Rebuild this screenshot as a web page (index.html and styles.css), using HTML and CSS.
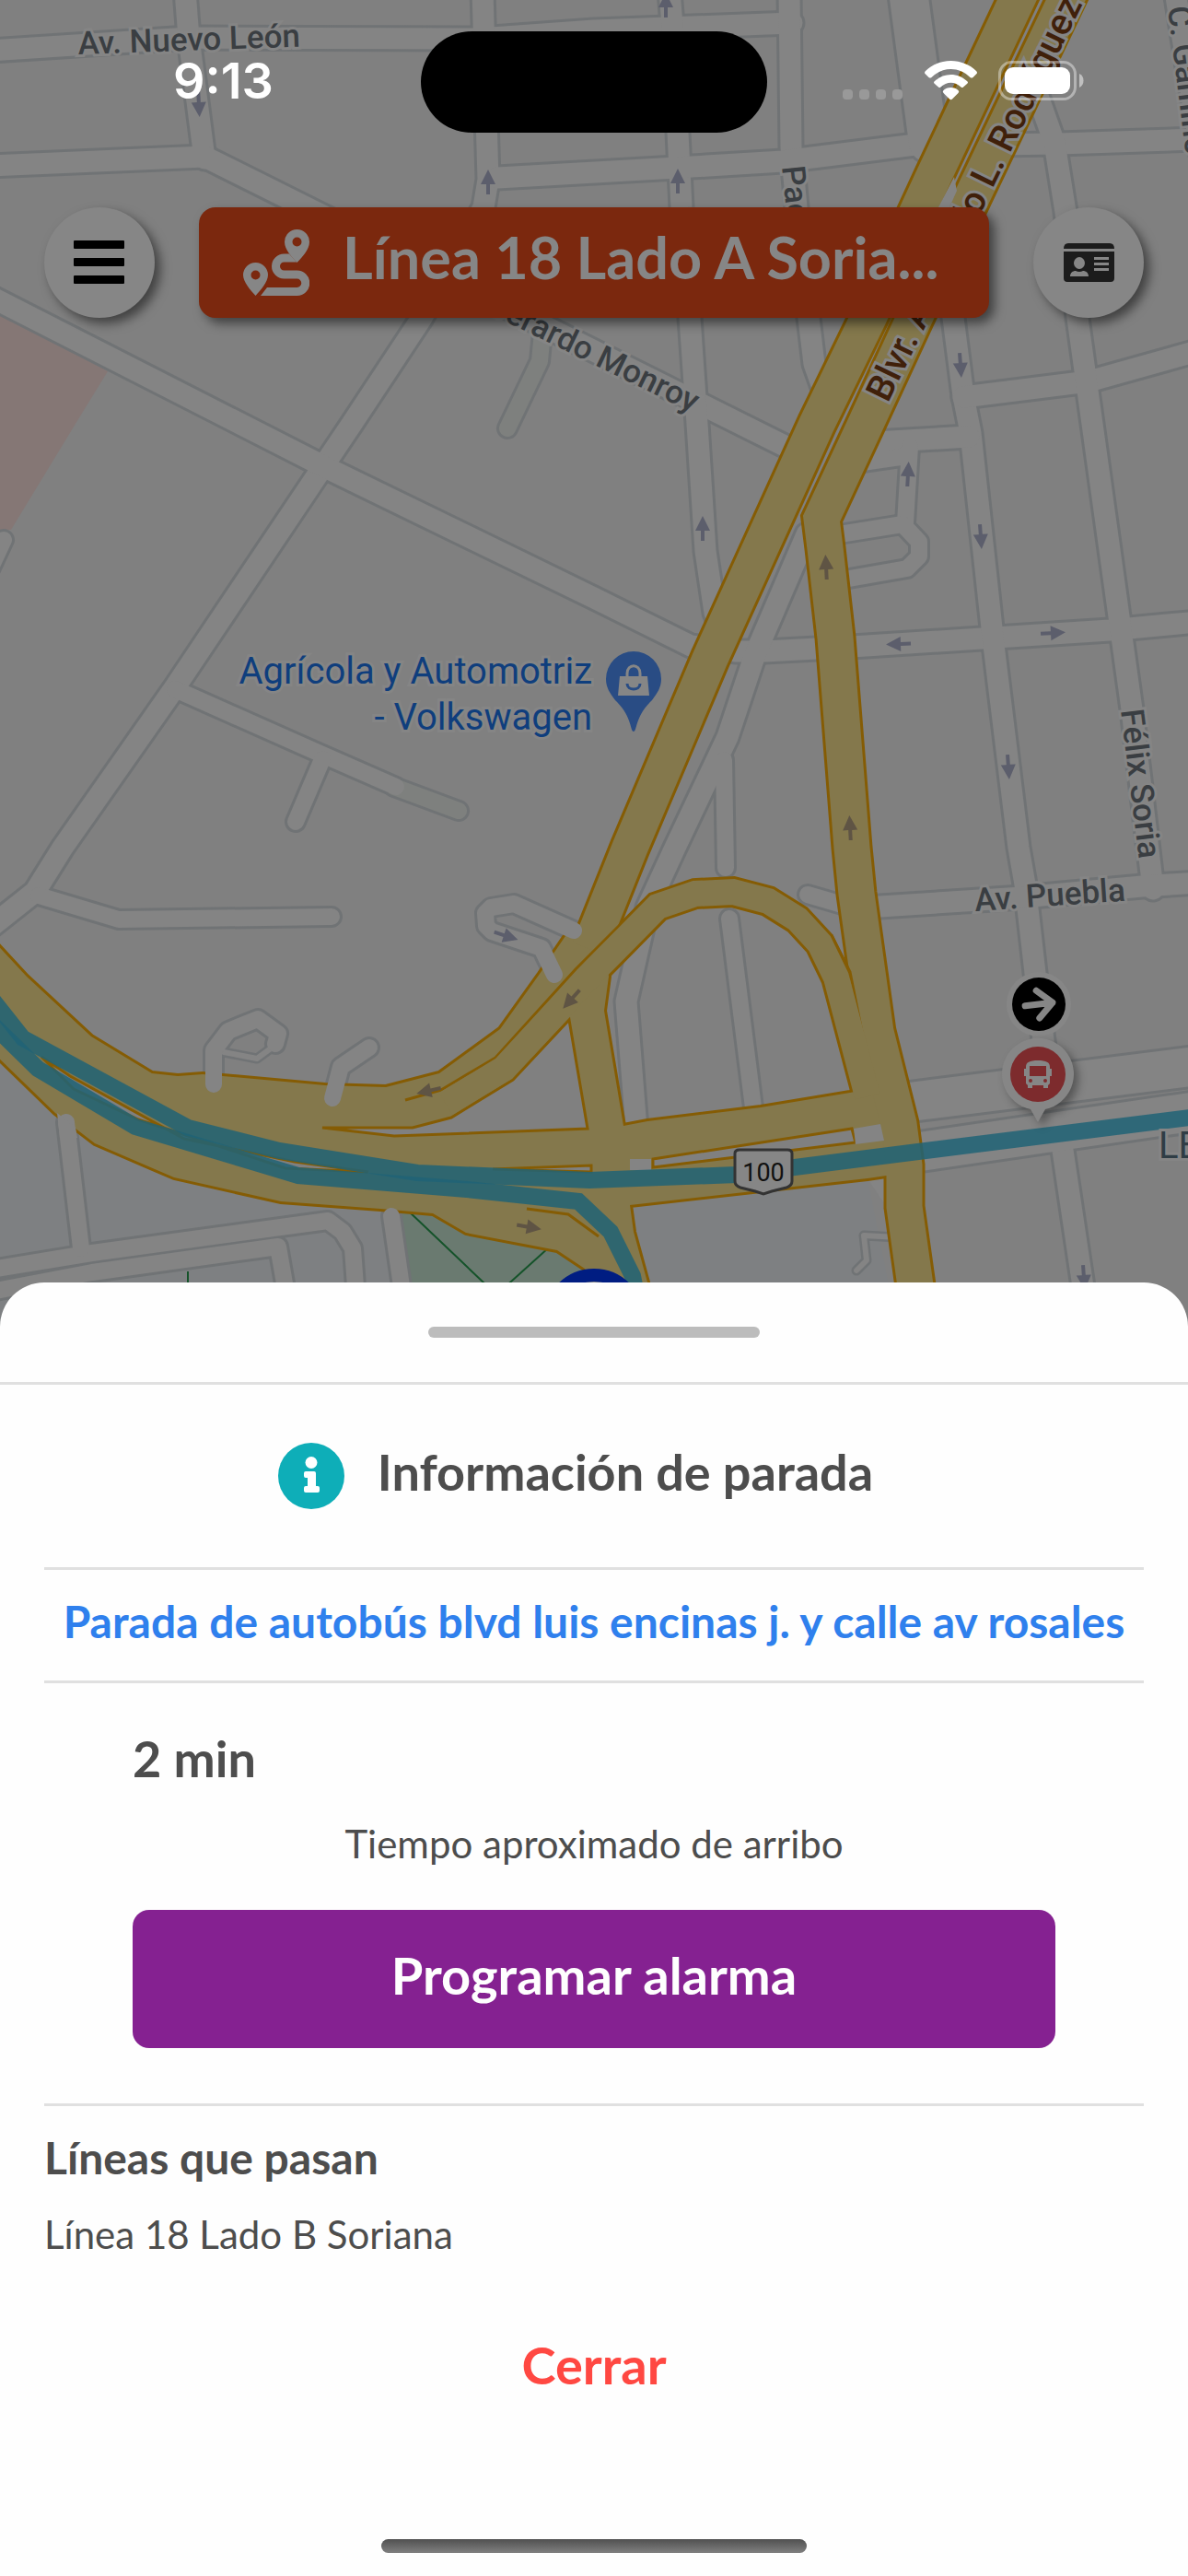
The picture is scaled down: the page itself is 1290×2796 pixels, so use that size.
FILE: index.html
```html
<!DOCTYPE html>
<html lang="es">
<head>
    <meta charset="UTF-8">
    <meta name="viewport" content="width=device-width, initial-scale=1.0">
    <title>Información de parada</title>
    <link rel="stylesheet" href="styles.css">
</head>
<body>
    <div class="screen">
        <div class="map-area">
            <!-- Map -->
            <svg class="map" viewBox="0 0 1290 1440" preserveAspectRatio="xMidYMin slice" aria-hidden="true">
                <defs>
                    <g id="streets">
                        <path d="M-10 55L205 41L520 42L645 33L860 25"/>
                        <path d="M201 -10L205 41L222 172"/>
                        <path d="M-10 180L222 170L850 483"/>
                        <path d="M524 -10L530 195L525 225L458 345L382 460L347 512L190 746L68 920L38 968L-10 1006"/>
                        <path d="M-10 322L355 508L645 649L750 701L800 707H830L925 702L1066 693L1205 684L1300 675"/>
                        <path d="M727 -10L731 40L736 144L740 225L749 345L757 460L766 598L776 665L790 700"/>
                        <path d="M857 -10L859 160L865 225L878 345L884 395L900 440"/>
                        <path d="M540 193L735 182L850 175L1010 155"/>
                        <path d="M1080 157L1150 156L1300 151"/>
                        <path d="M1020 200L1035 345L1046 430L1054 470L1079 700L1106 920L1113 960L1124 1056L1138 1170"/>
                        <path d="M1152 1235L1178 1410"/>
                        <path d="M1046 431L1182 414L1300 381"/>
                        <path d="M950 480L1052 474"/>
                        <path d="M1122 90L1145 155L1157 230L1170 345L1186 460L1229 770L1252 965"/>
                        <path d="M1276 -10L1306 180"/>
                        <path d="M876 580L820 710L790 800L733 920L703 985L680 1087L691 1225"/>
                        <path d="M940 985L1110 974L1240 962L1300 958"/>
                    </g>
                    <g id="lanes">
                        <path d="M42 972L129 998L360 995"/>
                        <path d="M190 748L350 819L430 854"/>
                        <path d="M350 824L321 892"/>
                        <path d="M4 586L-12 620"/>
                        <path d="M930 503L985 495"/>
                        <path d="M988 485L983 568"/>
                        <path d="M905 581L980 569L998 588V604L985 617L905 631"/>
                        <path d="M786 825L788 942"/>
                        <path d="M792 997L819 1210"/>
                        <path d="M877 971L925 985"/>
                        <path d="M-10 1378L100 1360L356 1325L372 1337L383 1355L387 1410"/>
                        <path d="M-10 1402L100 1381L302 1353L312 1410"/>
                    </g>
                    <!-- Dead ends that run over the highway -->
                    <g id="spurs">
                        <path d="M232 1177V1140L248 1119L280 1106L302 1122L299 1133"/>
                        <path d="M361 1192L370 1158L401 1137"/>
                        <path d="M623 1010L558 981L533 985L527 991L528 1005L534 1011L588 1029L602 1058"/>
                        <path d="M72 1218L88 1355"/>
                        <path d="M425 1320L438 1410"/>
                    </g>
                    <g id="avenues">
                        <path d="M986 -10L1008 155"/>
                        <path d="M980 1197L1300 1157"/>
                        <path d="M985 1252L1300 1206"/>
                    </g>
                    <g id="boulevard">
                        <path d="M1109 -10L1014 191L943 345L887 460L771 715L684 920L640 1030"/>
                        <path d="M1162 -10L993 345L940 460L892 563L896 595L907 692L925 920L930 970L951 1120L976 1220L982 1265V1310L996 1410"/>
                    </g>
                    <g id="loop">
                        <path d="M484 1198L547 1160L645 1054L714 984L755 970L796 968L834 978L866 998L890 1024L908 1061L942 1190"/>
                    </g>
                    <path id="highway" d="M-10 1018L29 1060L99 1125L165 1165L193 1168L220 1166L353 1178L419 1180L477 1165L543 1117L586 1057L618 1010L656 1000L661 1060L656 1097L677 1222L703 1217L826 1202L923 1186L980 1175L990 1272L942 1279L684 1308L688 1337L708 1410H650L635 1377L605 1357L506 1338L470 1317L413 1312L305 1304L189 1278L103 1241L60 1208L-10 1140Z"/>
                    <path id="arrow" d="M0 -13L8 3H2V14H-2V3H-8Z"/>
                </defs>

                <rect class="land" width="1290" height="1440"/>
                <path class="block-pink" d="M0 340L117 403L82 460L12 575H0Z"/>
                <path class="block-blue" d="M0 1150L60 1208L189 1278L413 1312L450 1440H0ZM684 1308L942 1279L974 1440H700Z"/>
                <path class="park" d="M430 1300L640 1350V1440H450Z"/>

                <use href="#streets" class="street-edge"/>
                <use href="#lanes" class="lane-edge"/>
                <use href="#avenues" class="avenue-edge"/>
                <use href="#spurs" class="lane-edge"/>
                <path class="lane-edge" d="M590 350L586 392L551 465M428 854L498 880"/>
                <path class="lane-green" d="M590 350L586 392L551 465M428 854L498 880"/>
                <path class="link-edge" d="M243 1142L279 1149L294 1138M975 1343L938 1341L941 1368L930 1379"/>
                <use href="#streets" class="street"/>
                <use href="#lanes" class="lane"/>
                <use href="#avenues" class="avenue"/>
                <path class="link" d="M243 1142L279 1149L294 1138M975 1343L938 1341L941 1368L930 1379"/>
                <path class="paved" d="M942 1279L970 1275L964 1312Z"/>
                <path class="trail" d="M442 1313L525 1392L533 1400M596 1354L545 1400M204 1380V1400"/>

                <!-- Highway and boulevard -->
                <use href="#highway" class="highway-edge"/>
                <use href="#boulevard" class="boulevard-edge"/>
                <use href="#loop" class="loop-edge"/>
                <use href="#highway" class="highway"/>
                <use href="#boulevard" class="boulevard"/>
                <path class="island" d="M618 1107L638 1225L428 1233L350 1224H448L490 1213L557 1172Z"/>
                <path class="island" d="M709 1258L925 1225L929 1240L709 1267Z"/>
                <path class="island" d="M45 1147L76 1168L200 1236L320 1261L400 1272L310 1268L150 1215L80 1182Z"/>
                <path class="island" d="M535 1269L642 1265V1272Z"/>
                <path class="seam" d="M572 1312L617 1318L650 1342M440 1194L479 1183L538 1148L625 1052L645 1032M645 1032L705 972"/>
                <path class="seam" d="M903 1015L923 1055L938 1130"/>
                <use href="#loop" class="loop"/>
                <path class="paved" d="M927 1225L956 1220L960 1238L929 1242ZM684 1258H707V1270H684ZM1036 192L1039 207L1031 225H1019Z"/>
                <use href="#spurs" class="lane"/>
                <path class="paved" d="M62 1208L82 1224L84 1235H65Z"/>

                <!-- Bus route -->
                <path class="route" d="M-10 1083L25 1127L204 1224L303 1249L453 1273L640 1281L800 1275L997 1250L1300 1212"/>
                <path class="route" d="M-10 1110L41 1160L147 1223L324 1276L507 1291L628 1304L663 1337L687 1385L692 1410"/>

                <!-- Traffic direction -->
                <g class="arrow">
                    <use href="#arrow" transform="translate(216 114) rotate(177)"/>
                    <use href="#arrow" transform="translate(530 197)"/>
                    <use href="#arrow" transform="translate(723 5)"/>
                    <use href="#arrow" transform="translate(736 196)"/>
                    <use href="#arrow" transform="translate(1043 397) rotate(176)"/>
                    <use href="#arrow" transform="translate(763 573)"/>
                    <use href="#arrow" transform="translate(986 514) rotate(3)"/>
                    <use href="#arrow" transform="translate(1065 583) rotate(176)"/>
                    <use href="#arrow" transform="translate(975 699) rotate(-92)"/>
                    <use href="#arrow" transform="translate(1144 687) rotate(87)"/>
                    <use href="#arrow" transform="translate(1095 833) rotate(176)"/>
                    <use href="#arrow" transform="translate(550 1016) rotate(108)"/>
                    <use href="#arrow" transform="translate(1177 1387) rotate(176)"/>
                </g>
                <g class="arrow-brown">
                    <use href="#arrow" transform="translate(897 615) rotate(-3)"/>
                    <use href="#arrow" transform="translate(923 898) rotate(-3)"/>
                    <use href="#arrow" transform="translate(620 1085) rotate(222)"/>
                    <use href="#arrow" transform="translate(465 1184) rotate(-103)"/>
                    <use href="#arrow" transform="translate(575 1332) rotate(100)"/>
                </g>

                <!-- Labels -->
                <text class="label" transform="translate(85 59) rotate(-2)">Av. Nuevo León</text>
                <text class="label" transform="translate(849 181) rotate(84)">Pac</text>
                <text class="label" text-anchor="end" transform="translate(752 448) rotate(26)">Gerardo Monroy</text>
                <text class="label" transform="translate(1268 8) rotate(83)">C. Gamino</text>
                <text class="label" transform="translate(1217 771) rotate(83)">Félix Soria</text>
                <text class="label" transform="translate(1059 989) rotate(-4)">Av. Puebla</text>
                <text class="label label-road" transform="translate(964 438) rotate(-64)">Blvr. Abelardo L. Rodríguez</text>
                <text class="label label-area" x="1258" y="1257">LE</text>
                <text class="label label-place" x="643" y="742">Agrícola y Automotriz</text>
                <text class="label label-place" x="643" y="792">- Volkswagen</text>

                <!-- Shop pin -->
                <path class="pin-shop" d="M688 794C684 794 687 778 668 760C662 752 658 746 658 737A30 30 0 0 1 718 737C718 746 714 752 708 760C689 778 692 794 688 794Z"/>
                <path class="pin-glyph" d="M673 734H703L705 755H671Z"/>
                <path class="pin-handle" d="M681 735V731C681 720 695 720 695 731V735"/>
                <path class="pin-smile" d="M681 742C681 750 695 750 695 742"/>

                <!-- Highway shield -->
                <path class="shield" d="M798 1252Q798 1248 803 1248H855Q860 1248 860 1252V1282Q860 1287 854 1289L838 1293L829 1296L820 1293L804 1289Q798 1287 798 1282Z"/>
                <text class="shield-text" x="829" y="1282">100</text>

                <!-- Bus marker -->
                <circle class="halo" cx="1128" cy="1090" r="35"/>
                <circle class="heading" cx="1128" cy="1090" r="29"/>
                <path class="heading-arrow" transform="rotate(-7 1128 1090)" d="M1113 1090H1143M1127 1075L1143 1090L1127 1105"/>
                <path class="marker" d="M1127 1218L1119 1204A39 39 0 1 1 1135 1204Z"/>
                <circle class="marker-red" cx="1127" cy="1166" r="30"/>
                <path class="marker-bus" fill-rule="evenodd" d="M1127 1151C1136 1151 1140 1153 1140 1158V1160H1142V1168H1140V1176L1138 1178V1181H1133V1178H1121V1181H1116V1178L1114 1176V1168H1112V1160H1114V1158C1114 1153 1118 1151 1127 1151ZM1118 1157V1168H1136V1157ZM1117 1173A2 2 0 1 0 1121 1173A2 2 0 1 0 1117 1173ZM1133 1173A2 2 0 1 0 1137 1173A2 2 0 1 0 1133 1173Z"/>

                <!-- Selected stop -->
                <circle class="stop" cx="645" cy="1432" r="48"/>
            </svg>

            <div class="status-bar">
                <div class="status-time">9:13</div>
                <div class="status-island"></div>
                <div class="status-icons">
                    <svg width="66" height="43" viewBox="0 0 66 43" fill="#999" aria-hidden="true">
                        <rect x="0" y="31" width="11" height="11" rx="4"/>
                        <rect x="18" y="31" width="11" height="11" rx="4"/>
                        <rect x="36" y="31" width="11" height="11" rx="4"/>
                        <rect x="54" y="31" width="11" height="11" rx="4"/>
                    </svg>
                    <svg width="57" height="43" viewBox="0 0 57 43" fill="#fff" aria-hidden="true">
                        <path d="M28.500 0C39 0 49 4 56 11Q58 13 56 14.500L52.500 18Q51 19 49.500 18C43.500 12 36 9 28.500 9S13.500 12 7.500 18Q6 19 4.500 18L1 14.500Q-1 13 1 11C8 4 18 0 28.500 0Z"/>
                        <path d="M28.500 15C35 15 41 17.500 46 22Q48 23.500 46 25L42 28.500Q41 29.500 39.500 28.500C33 22 24 22 17.500 28.500Q16 29.500 15 28.500L11 25Q9 23.500 11 22C16 17.500 22 15 28.500 15Z"/>
                        <path d="M28.500 29C32 29 34.500 30 36.500 32Q38 33.500 36.500 35L30 41.500Q28.500 43 27 41.500L20.500 35Q19 33.500 20.500 32C22.500 30 25 29 28.500 29Z"/>
                    </svg>
                    <svg width="93" height="43" viewBox="0 0 93 43" aria-hidden="true">
                        <rect x="1.500" y="1.500" width="82" height="40" rx="13" fill="none" stroke="#fff" stroke-opacity=".4" stroke-width="3"/>
                        <rect x="7" y="7" width="71" height="29" rx="9" fill="#fff"/>
                        <path d="M88 14C94 16 94 27 88 29Z" fill="#fff" fill-opacity=".5"/>
                    </svg>
                </div>
            </div>

            <div class="top-bar">
                <button class="round-button" aria-label="Menú">
                    <svg width="56" height="48" viewBox="0 0 56 48" aria-hidden="true">
                        <rect width="55" height="9" rx="1"/>
                        <rect y="19" width="55" height="9" rx="1"/>
                        <rect y="38" width="55" height="9" rx="1"/>
                    </svg>
                </button>
                <button class="line-button">
                    <svg width="72" height="72" viewBox="0 0 72 72" fill="#868686" aria-hidden="true">
                        <path fill-rule="evenodd" d="M58.500 0A13.500 13.500 0 0 1 72 13.500C72 22 64 30 58.500 36C53 30 45 22 45 13.500A13.500 13.500 0 0 1 58.500 0ZM58.500 8.500A5 5 0 1 0 58.500 18.500A5 5 0 1 0 58.500 8.500Z"/>
                        <path fill-rule="evenodd" d="M13.500 36A13.500 13.500 0 0 1 27 49.500C27 57 19 66 13.500 72C8 66 0 57 0 49.500A13.500 13.500 0 0 1 13.500 36ZM13.500 44.500A5 5 0 1 0 13.500 54.500A5 5 0 1 0 13.500 44.500Z"/>
                        <path d="M50 26.500H44.500A13.500 13.500 0 0 0 44.500 53.500H58.500A4.700 4.700 0 0 1 58.500 63H26L19 72H58.500A13.500 13.500 0 0 0 58.500 44.500H44.500A4.500 4.500 0 0 1 44.500 35.500H58Z"/>
                    </svg>
                    <span class="line-name">Línea 18 Lado A Soria...</span>
                </button>
                <button class="round-button" aria-label="Tarjeta">
                    <svg width="55" height="42" viewBox="0 0 55 42" aria-hidden="true">
                        <path fill="#1c1c1c" d="M5 0H50Q55 0 55 6H0Q0 0 5 0ZM0 9H55V38Q55 42 51 42H4Q0 42 0 38Z"/>
                        <path fill="#868686" d="M17 15A6 6.500 0 0 1 17 28A6 6.500 0 0 1 17 15ZM7 36C7 32 10 30 13 30Q17 32 21 30C24 30 27 32 27 36ZM33 15H49V18H33ZM33 21H49V24H33ZM33 27H49V30H33Z"/>
                    </svg>
                </button>
            </div>
        </div>

        <!-- Bottom sheet -->
        <div class="sheet">
            <div class="sheet-top">
                <div class="handle"></div>
            </div>
            <div class="sheet-body">
                <div class="title-row">
                    <svg width="72" height="72" viewBox="0 0 72 72" aria-hidden="true">
                        <circle cx="36" cy="36" r="36" fill="#0eaeb8"/>
                        <circle cx="36" cy="21.500" r="6.500" fill="#fff"/>
                        <path fill="#fff" d="M30 31H39Q41 31 41 33V47H43Q45 47 45 49V52Q45 54 43 54H30Q28 54 28 52V49Q28 47 30 47H32V38H30Q28 38 28 36V33Q28 31 30 31Z"/>
                    </svg>
                    <h1 class="title">Información de parada</h1>
                </div>
                <h2 class="stop-name">Parada de autobús blvd luis encinas j. y calle av rosales</h2>
                <div class="arrival">
                    <p class="minutes">2 min</p>
                    <p class="caption">Tiempo aproximado de arribo</p>
                    <button class="alarm-button">Programar alarma</button>
                </div>
                <div class="lines">
                    <h3 class="lines-title">Líneas que pasan</h3>
                    <p class="line-item">Línea 18 Lado B Soriana</p>
                </div>
                <button class="close-button">Cerrar</button>
            </div>
            <div class="home-indicator"></div>
        </div>
    </div>
</body>
</html>
```
FILE: styles.css
```css
* {
    box-sizing: border-box;
}

body {
    margin: 0;
    background-color: #808080;
    color: #4d4d4d;
    font-family: Lato, sans-serif;
}

h1, h2, h3, p {
    margin: 0;
}

button {
    border: none;
    padding: 0;
    font-family: inherit;
    font-weight: bold;
    cursor: pointer;
}

.screen {
    display: flex;
    flex-direction: column;
    min-height: 100vh;
}

/* Map */
.map-area {
    position: relative;
    flex: 1;
    min-height: 400px;
    margin-bottom: -48px;
    overflow: hidden;
}

.map {
    position: absolute;
    inset: 0;
    width: 100%;
    height: 100%;
}

.land { fill: #808080; }
.block-pink { fill: #857775; }
.block-blue { fill: #7e8082; }
.park { fill: #6a7a70; }
.paved { fill: #848484; }

.street-edge, .lane-edge, .avenue-edge, .link-edge,
.street, .lane, .avenue, .link, .lane-green {
    fill: none;
    stroke-linecap: round;
    stroke-linejoin: round;
}

.street-edge, .lane-edge, .avenue-edge, .link-edge { stroke: #707375; }
.street, .lane, .avenue, .link { stroke: #848484; }
.street-edge { stroke-width: 29px; }
.street { stroke-width: 23px; }
.lane-edge { stroke-width: 24px; }
.lane { stroke-width: 18px; }
.lane-green { stroke: #7e807e; stroke-width: 18px; }
.avenue-edge { stroke-width: 48px; }
.avenue { stroke-width: 42px; }
.link-edge { stroke-width: 11px; }
.link { stroke-width: 6px; }

.trail {
    fill: none;
    stroke: #15532a;
    stroke-width: 2px;
}

.highway-edge, .boulevard-edge, .loop-edge, .seam {
    fill: none;
    stroke: #855c04;
}

.highway-edge { stroke-width: 6px; }
.highway { fill: #84784c; }

.boulevard-edge { stroke-width: 45px; }
.loop-edge { stroke-width: 34px; }
.seam { stroke-width: 3px; }

.boulevard, .loop {
    fill: none;
    stroke: #84784c;
}

.boulevard { stroke-width: 39px; }
.loop { stroke-width: 28px; }

.island {
    fill: #808080;
    stroke: #855c04;
    stroke-width: 3px;
}

.route {
    fill: none;
    stroke: #216376;
    stroke-width: 18px;
    opacity: 0.86;
}

.arrow { fill: #5c5e6c; }
.arrow-brown { fill: #5f5444; }

.label {
    fill: #3a3e42;
    stroke: #858585;
    stroke-width: 6px;
    paint-order: stroke;
    font-family: Roboto, sans-serif;
    font-size: 35px;
    font-weight: 500;
}

.label-road {
    fill: #40200a;
    font-size: 40px;
}

.label-area {
    fill: #2f3d45;
    font-size: 40px;
    font-weight: 400;
}

.label-place {
    fill: #0f3e7d;
    font-size: 40px;
    font-weight: 400;
    text-anchor: end;
}

.pin-shop { fill: #294c84; }
.pin-glyph { fill: #868686; }
.pin-handle, .pin-smile { fill: none; stroke-width: 3px; }
.pin-handle { stroke: #868686; }
.pin-smile { stroke: #294c84; }

.shield {
    fill: #868686;
    stroke: #333;
    stroke-width: 3px;
}

.shield-text {
    fill: #111;
    font-family: Roboto, sans-serif;
    font-size: 27px;
    text-anchor: middle;
}

.halo { fill: #868686; }
.heading { fill: #000; }

.heading-arrow {
    fill: none;
    stroke: #868686;
    stroke-width: 7px;
    stroke-linecap: round;
    stroke-linejoin: round;
}

.marker {
    fill: #868686;
    filter: drop-shadow(5px 5px 5px rgba(0, 0, 0, 0.35));
}

.marker-red { fill: #7d2b2d; }
.marker-bus { fill: #868686; }

.stop {
    fill: #868686;
    stroke: #001d82;
    stroke-width: 14px;
}

/* Status bar */
.status-bar {
    position: relative;
    display: grid;
    grid-template-columns: 1fr 376px 1fr;
    align-items: center;
    padding-top: 34px;
}

.status-time {
    padding: 0 0 2px 28px;
    color: #fff;
    font-family: Inter, sans-serif;
    font-size: 54px;
    font-weight: 600;
    line-height: 64px;
    text-align: center;
}

.status-island {
    height: 110px;
    border-radius: 55px;
    background-color: #000;
}

.status-icons {
    display: flex;
    justify-content: flex-end;
    gap: 23px;
    padding: 0 113px 4px 0;
}

/* Top bar */
.top-bar {
    position: relative;
    display: flex;
    gap: 48px;
    padding: 81px 48px 0;
}

.round-button {
    display: flex;
    justify-content: center;
    align-items: center;
    flex: none;
    width: 120px;
    height: 120px;
    border-radius: 50%;
    background-color: #868686;
    box-shadow: 6px 6px 12px rgba(0, 0, 0, 0.5);
}

.line-button {
    display: flex;
    align-items: center;
    gap: 36px;
    flex: 1;
    min-width: 0;
    height: 120px;
    padding: 0 36px 0 48px;
    border-radius: 18px;
    background-color: #7b280e;
    box-shadow: 6px 6px 12px rgba(0, 0, 0, 0.5);
    color: #868686;
    font-size: 63px;
}

.line-button svg {
    flex: none;
}

.line-name {
    padding-bottom: 14px;
    overflow: hidden;
    text-overflow: ellipsis;
    white-space: nowrap;
}

/* Bottom sheet */
.sheet {
    position: relative;
    display: flex;
    flex-direction: column;
    padding-bottom: 25px;
    border-radius: 48px 48px 0 0;
    background-color: #fefefe;
}

.sheet-top {
    padding: 48px 0;
    border-bottom: 3px solid #e0e0e0;
}

.handle {
    width: 360px;
    height: 12px;
    margin: 0 auto;
    border-radius: 6px;
    background-color: #bcbcbc;
}

.sheet-body {
    display: flex;
    flex-direction: column;
    padding: 0 48px;
}

.title-row {
    display: flex;
    justify-content: center;
    align-items: center;
    gap: 36px;
    padding: 63px 40px 63px 0;
    border-bottom: 3px solid #e0e0e0;
}

.title {
    padding-bottom: 8px;
    font-size: 54px;
    line-height: 64px;
}

.stop-name {
    padding: 27px 0 35px;
    border-bottom: 3px solid #e0e0e0;
    color: #2f80ed;
    font-size: 48px;
    line-height: 58px;
    text-align: center;
}

.arrival {
    display: flex;
    flex-direction: column;
    padding: 50px 96px 60px;
    border-bottom: 3px solid #e0e0e0;
}

.minutes {
    font-size: 54px;
    font-weight: bold;
    line-height: 64px;
}

.caption {
    margin: 35px 0 47px;
    font-size: 42px;
    line-height: 50px;
    text-align: center;
}

.alarm-button {
    height: 150px;
    padding-bottom: 10px;
    border-radius: 18px;
    background-color: #852191;
    color: #fefefe;
    font-size: 56px;
}

.lines {
    padding: 27px 0 85px;
}

.lines-title {
    font-size: 48px;
    line-height: 58px;
}

.line-item {
    margin-top: 29px;
    font-size: 42px;
    line-height: 50px;
}

.close-button {
    align-self: center;
    background: none;
    color: #ff4842;
    font-size: 56px;
    line-height: 64px;
}

.home-indicator {
    width: 462px;
    height: 15px;
    margin: 157px auto 0;
    border-radius: 8px;
    background: linear-gradient(#505050, #808080);
}
```
